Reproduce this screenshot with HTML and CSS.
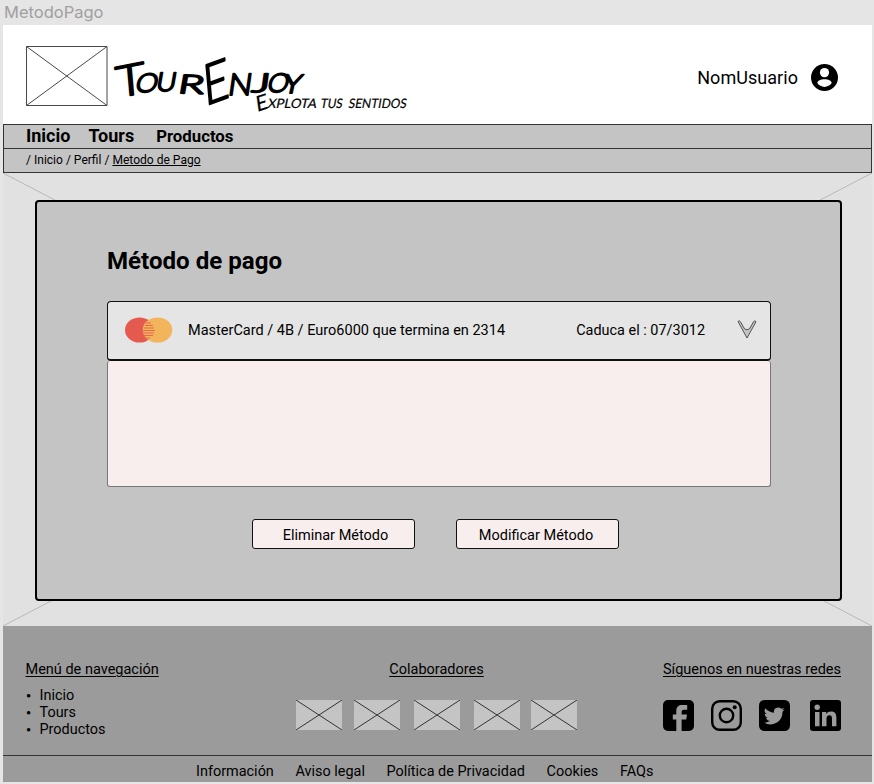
FILE: index.html
```html
<!DOCTYPE html>
<html lang="es">
<head>
<meta charset="utf-8">
<title>MetodoPago</title>
<link rel="stylesheet" href="styles.css">
</head>
<body>
<div class="frame-name">MetodoPago</div>
<div class="frame">
  <header class="header">
    <svg class="logo-box" viewBox="0 0 82 60"><path d="M.5.5h80.500v59H.5zL81 59.500M81 .5L.5 59.500"/></svg>
    <svg class="brand" viewBox="0 0 300 60" role="img" aria-label="TourEnjoy, explota tus sentidos">
      <g class="brand-name">
        <text class="tall" transform="translate(9 52) rotate(-11) skewX(-6)" textLength="30" lengthAdjust="spacingAndGlyphs">T</text>
        <text transform="translate(26 46) skewX(-14)" textLength="22" lengthAdjust="spacingAndGlyphs">O</text>
        <text transform="translate(47 45) skewX(-10)" textLength="20" lengthAdjust="spacingAndGlyphs">U</text>
        <text transform="translate(69 47) rotate(2) skewX(-8)" textLength="26" lengthAdjust="spacingAndGlyphs">R</text>
        <text class="initial" transform="translate(97 60) rotate(-20) skewX(-15)" textLength="27" lengthAdjust="spacingAndGlyphs">E</text>
        <text class="wide" transform="translate(119 49) skewX(-8)" textLength="24" lengthAdjust="spacingAndGlyphs">N</text>
        <text transform="translate(143 46) skewX(-8)" textLength="18" lengthAdjust="spacingAndGlyphs">J</text>
        <text transform="translate(158 46) skewX(-14)" textLength="21" lengthAdjust="spacingAndGlyphs">O</text>
        <text transform="translate(174 47) skewX(-12)" textLength="18" lengthAdjust="spacingAndGlyphs">Y</text>
      </g>
      <g class="tagline">
        <text class="tagline-initial" transform="translate(149 66) rotate(-18) skewX(-10)">E</text>
        <text transform="translate(159 62) skewX(-12)" textLength="49" lengthAdjust="spacingAndGlyphs">XPLOTA</text>
        <text transform="translate(212 62) skewX(-10)" textLength="22" lengthAdjust="spacingAndGlyphs">TUS</text>
        <text transform="translate(240 62) skewX(-10)" textLength="58" lengthAdjust="spacingAndGlyphs">SENTIDOS</text>
      </g>
    </svg>
    <div class="user">
      <span>NomUsuario</span>
      <svg viewBox="0 0 27 27"><circle cx="13.5" cy="13.5" r="13.5"/><ellipse class="cut" cx="13.5" cy="8.6" rx="4.6" ry="4.7"/><path class="cut" d="M6.3 19.1c0-5.1 14.4-5.1 14.4 0-3.3 5.1-11.1 5.1-14.4 0z"/></svg>
    </div>
  </header>
  <nav class="nav"><a>Inicio</a><a>Tours</a><a class="nav-small">Productos</a></nav>
  <div class="crumbs"><span>/ Inicio / Perfil / <u>Metodo de Pago</u></span></div>
  <main class="main">
    <svg class="cross" viewBox="0 0 869 453"><path d="M0 0L869 453M869 0L0 453"/></svg>
    <section class="panel">
      <h1>Método de pago</h1>
      <div class="card-row">
        <svg class="card-logo" viewBox="0 0 48 26"><ellipse cx="14.5" cy="13" rx="14.5" ry="12.6" fill="#e55a4f"/><ellipse cx="32.5" cy="13" rx="14.8" ry="12.6" fill="#f3b55b"/><path d="M21 6h5M20 8.5h8M19 11h10M18 13.5h12M18 16h11M19 18.5h9M20 21h5" stroke="#e5674f" stroke-width="1"/></svg>
        <span class="card-name">MasterCard / 4B / Euro6000 que termina en 2314</span>
        <span class="expires">Caduca el : 07/3012</span>
        <svg class="chevron" viewBox="0 0 20 19"><path d="M1 1.5Q2.4 0 3.5 1.8L7.5 8.8Q10 10.8 12.5 8.8L16.5 1.8Q18 0 19 1.7L10 18Z"/></svg>
      </div>
      <div class="details"></div>
      <div class="actions"><button>Eliminar Método</button><button class="edit">Modificar Método</button></div>
    </section>
  </main>
  <footer class="footer">
    <div class="footer-top">
      <div class="menu"><h2>Menú de navegación</h2><ul><li>Inicio</li><li>Tours</li><li>Productos</li></ul></div>
      <div class="partners"><h2>Colaboradores</h2>
        <div class="partner-list">
          <svg viewBox="0 0 46 30"><path d="M0 0L46 30M46 0L0 30"/></svg>
          <svg viewBox="0 0 46 30"><path d="M0 0L46 30M46 0L0 30"/></svg>
          <svg viewBox="0 0 46 30"><path d="M0 0L46 30M46 0L0 30"/></svg>
          <svg viewBox="0 0 46 30"><path d="M0 0L46 30M46 0L0 30"/></svg>
          <svg viewBox="0 0 46 30"><path d="M0 0L46 30M46 0L0 30"/></svg>
        </div>
      </div>
      <div class="social"><h2>Síguenos en nuestras redes</h2>
        <div class="social-list">
          <svg viewBox="0 0 31 31"><rect width="31" height="31" rx="5"/><path class="hole" d="M13.3 31V19.5H9.8v-5h3.5v-3.6c0-4 2.3-5.8 6-5.8h4.9v4.7h-3.100c-1.800 0-2.500.8-2.500 2.300v2.400h5.400l-.8 5h-4.600V31z"/></svg>
          <svg viewBox="0 0 31 31"><rect class="ring" x="1.2" y="1.2" width="28.6" height="28.6" rx="7.5"/><circle class="ring" cx="15.5" cy="15.5" r="6.700"/><circle cx="23.700" cy="7.300" r="2"/></svg>
          <svg viewBox="0 0 31 31"><rect width="31" height="31" rx="5.5"/><path class="hole" transform="translate(5.1 5.2) scale(.87)" d="M23.5 4.9c-.9.4-1.8.7-2.8.8 1-.6 1.8-1.6 2.1-2.7-.9.6-2 1-3.1 1.2a4.9 4.9 0 0 0-8.3 4.5C7.4 8.5 3.8 6.5 1.4 3.6a4.9 4.9 0 0 0 1.5 6.6c-.8 0-1.5-.2-2.2-.6v.1c0 2.4 1.7 4.3 3.9 4.8-.7.2-1.5.2-2.2.1.6 2 2.4 3.4 4.6 3.4A9.900 9.900 0 0 1-.2 20 13.900 13.900 0 0 0 21.100 7.600c.9-.8 1.800-1.700 2.400-2.700z"/></svg>
          <svg viewBox="0 0 31 31"><rect width="31" height="31" rx="3"/><path class="hole" d="M5 12h4.500v14.300H5zM12 12h4.200v2c1-1.700 2.700-2.500 4.800-2.500 4.200 0 5.400 2.700 5.400 6.700v8.100H22v-7.300c0-2.100-.3-3.700-2.600-3.700-2.200 0-2.900 1.600-2.900 3.700v7.300H12z"/><circle class="hole" cx="7.200" cy="7.200" r="2.700"/></svg>
        </div>
      </div>
    </div>
    <div class="legal"><a>Información</a><a>Aviso legal</a><a>Política de Privacidad</a><a>Cookies</a><a>FAQs</a></div>
  </footer>
</div>
</body>
</html>
```
FILE: styles.css
```css
* { box-sizing: border-box; }
body { margin: 0; width: 874px; height: 784px; overflow: hidden; background: #e5e5e5; font-family: Roboto, "Liberation Sans", sans-serif; color: #000; font-size: 14.45px; }
svg { display: block; flex: none; }
h1, h2, ul { margin: 0; padding: 0; }
.frame-name { height: 25px; padding: 3px 0 0 4px; font: 16.5px/19px Inter, sans-serif; color: #a0a0a0; }
.frame { width: 869px; height: 757px; margin-left: 3px; background: #e1e1e1; }
.header { display: flex; height: 99px; background: #fff; padding: 21px 34px 0 22.5px; }
.logo-box { width: 82px; height: 60px; fill: none; stroke: #333; stroke-width: .9; }
.brand { width: 300px; height: 60px; overflow: visible; }
.brand-name { font: 300 26px Lato, sans-serif; stroke: #000; stroke-width: 1.9; stroke-linejoin: round; }
.tall { font-size: 43px; }
.initial { font-size: 54px; }
.wide { font-size: 30px; }
.tagline { font: 13px Lato, sans-serif; stroke: #000; stroke-width: .2; }
.tagline-initial { font-size: 21px; }
.user { display: flex; align-items: center; gap: 13px; height: 27px; margin: 18px 0 0 auto; font-size: 18px; letter-spacing: .05px; }
.user svg { width: 27px; height: 27px; }
.cut { fill: #fff; }
.nav { display: flex; height: 24px; border: 1px solid #333; border-bottom: 0; background: #c4c4c4; padding-left: 22px; font-size: 18px; font-weight: 700; line-height: 22px; }
.nav a + a { margin-left: 18px; }
.nav .nav-small { margin-left: 22px; font-size: 16.8px; }
.crumbs { height: 25px; border: 1px solid #333; background: #c4c4c4; padding: 3px 0 0 22px; font-size: 12.05px; line-height: 16px; }
.main { position: relative; height: 453px; padding: 27px 30px 0 32px; }
.cross { position: absolute; inset: 0; width: 869px; height: 453px; fill: none; stroke: #b8b8b8; }
.panel { position: relative; height: 401px; border: 2px solid #000; border-radius: 4px; background: #c4c4c4; padding: 43px 70px 0 70px; }
h1 { font-size: 24.1px; line-height: 33px; height: 56px; }
.card-row { display: flex; align-items: center; width: 664px; height: 60px; border: 1.5px solid #111; border-bottom-width: 2px; border-radius: 4px; background: #e5e5e5; padding: 0 13px 2px 17px; }
.card-logo { width: 48px; height: 26px; }
.card-name { margin-left: 15px; font-size: 14.5px; padding-top: 1px; }
.expires { margin-left: auto; margin-right: 32px; padding-top: 1px; }
.chevron { width: 20px; height: 19px; fill: #c4c4c4; stroke: #333; stroke-width: .8; }
.details { width: 664px; height: 126px; border: 1px solid #777; border-top: 0; border-radius: 3px; background: #f9eeee; }
.actions { display: flex; gap: 41px; margin: 32px 0 0 145px; }
button { width: 163px; height: 30px; padding: 3px 0 0 4px; border: 1.5px solid #111; border-radius: 3px; background: #f9eeee; color: #000; font: 14.5px Roboto, sans-serif; }
button.edit { padding-left: 0; padding-right: 3px; }
.footer { height: 156px; background: #9b9b9b; }
.footer-top { display: flex; justify-content: space-between; height: 129px; padding: 34px 31px 0 22.5px; }
h2 { font-size: 14.5px; font-weight: 400; line-height: 19px; text-decoration: underline; text-underline-offset: 2px; text-decoration-thickness: 1px; white-space: nowrap; }
ul { list-style: none; margin-top: 8px; line-height: 17px; }
li { display: flex; }
li::before { content: "•"; width: 14px; font: 11px/17px Inter, sans-serif; }
.menu { width: 271px; }
.partners { width: 281px; text-align: center; }
.partner-list { display: grid; grid-template-columns: 58px 60px 60px 57px 46px; margin-top: 21px; }
.partner-list svg { width: 46px; height: 30px; background: #c4c4c4; stroke: #333; stroke-width: 1; }
.social { width: 178px; margin-left: 86px; }
.social-list { display: grid; grid-template-columns: 48px 48px 51px 31px; margin-top: 21px; }
.social-list svg { width: 31px; height: 31px; }
.hole { fill: #9b9b9b; }
.ring { fill: none; stroke: #000; stroke-width: 2.4; }
.legal { display: flex; gap: 21.6px; height: 27px; border-top: 1px solid #333; padding: 6px 0 0 193px; line-height: 19px; font-size: 14.45px; }
```
